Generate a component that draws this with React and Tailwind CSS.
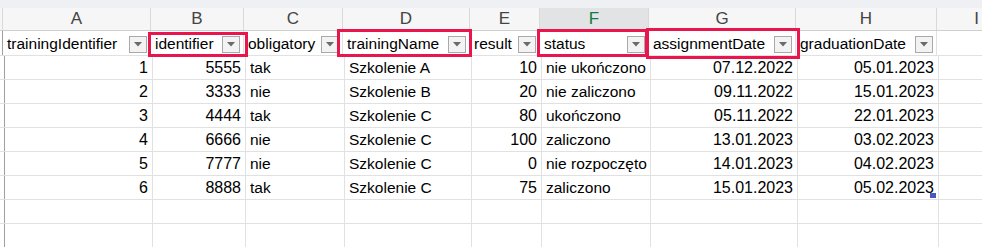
import React from "react";

// column layout: stub + A..I
const columns = [
  { letter: "", width: "w-[3px]" },
  { letter: "A", width: "w-[148px]", head: "trainingIdentifier", align: "right" },
  { letter: "B", width: "w-[93px]", head: "identifier", align: "right" },
  { letter: "C", width: "w-[99px]", head: "obligatory", align: "left" },
  { letter: "D", width: "w-[127px]", head: "trainingName", align: "left" },
  { letter: "E", width: "w-[70px]", head: "result", align: "right" },
  { letter: "F", width: "w-[109px]", head: "status", align: "left", selected: true },
  { letter: "G", width: "w-[147px]", head: "assignmentDate", align: "right" },
  { letter: "H", width: "w-[141px]", head: "graduationDate", align: "right" },
  { letter: "I", width: "w-[80px]" },
];

const rows = [
  ["1", "5555", "tak", "Szkolenie A", "10", "nie ukończono", "07.12.2022", "05.01.2023"],
  ["2", "3333", "nie", "Szkolenie B", "20", "nie zaliczono", "09.11.2022", "15.01.2023"],
  ["3", "4444", "tak", "Szkolenie C", "80", "ukończono", "05.11.2022", "22.01.2023"],
  ["4", "6666", "nie", "Szkolenie C", "100", "zaliczono", "13.01.2023", "03.02.2023"],
  ["5", "7777", "nie", "Szkolenie C", "0", "nie rozpoczęto", "14.01.2023", "04.02.2023"],
  ["6", "8888", "tak", "Szkolenie C", "75", "zaliczono", "15.01.2023", "05.02.2023"],
  [],
  [],
];

// red annotation boxes drawn over the header row
const marks = [
  "left-[148px] top-[32px] w-[100px] h-[25px]",
  "left-[337px] top-[29px] w-[135px] h-[28px]",
  "left-[537px] top-[29px] w-[111px] h-[28px]",
  "left-[646px] top-[28px] w-[154px] h-[31px]",
];

const FilterButton = () => (
  <div className="ml-auto mr-[3px] mb-[2px] self-end w-[18px] h-[17px] shrink-0 border border-[#a9a9a9] bg-[#f3f3f3] flex items-center justify-center">
    <svg width="8" height="5" viewBox="0 0 8 5">
      <polygon points="0,0 8,0 4,4.5" fill="#6a6a6a" />
    </svg>
  </div>
);

export default function App() {
  return (
    <div
      className="relative w-[982px] h-[247px] overflow-hidden bg-white text-black"
      style={{ fontFamily: '"Liberation Sans", Arial, sans-serif' }}
    >
      <div className="h-[8px] bg-[#eef0f3]" />

      {/* column letters */}
      <div className="flex h-[23px] bg-[#f6f6f6] border-b border-[#cfcfcf]">
        {columns.map((c, i) => (
          <div
            key={i}
            className={`${c.width} shrink-0 border-r border-[#d9d9d9] flex items-center justify-center text-[17px] ${
              c.selected ? "bg-[#e2e3e4] text-[#107c41]" : "text-[#444]"
            }`}
          >
            {c.letter}
          </div>
        ))}
      </div>

      {/* header row */}
      <div className="flex h-[25px] border-b border-[#e1e1e1]">
        {columns.map((c, i) => (
          <div
            key={i}
            className={`${c.width} shrink-0 flex items-center text-[15.5px] whitespace-nowrap ${
              i === 0 ? "border-r border-[#9f9f9f]" : "border-r border-[#e1e1e1]"
            }`}
          >
            {c.head && <span className="pl-[4px] pt-[2px]">{c.head}</span>}
            {c.head && <FilterButton />}
          </div>
        ))}
      </div>

      {/* data rows */}
      {rows.map((r, ri) => (
        <div key={ri} className="flex h-[24px] border-b border-[#e1e1e1]">
          {columns.map((c, i) => (
            <div
              key={i}
              className={`${c.width} shrink-0 flex items-center whitespace-nowrap pt-[1px] ${
                i === 0 ? "border-r border-[#9f9f9f]" : "border-r border-[#e1e1e1]"
              } ${c.align === "right" ? "justify-end pr-[4px] text-[16px]" : "pl-[4px] text-[15.5px]"}`}
            >
              {i > 0 && i < 9 ? r[i - 1] : null}
            </div>
          ))}
        </div>
      ))}

      {marks.map((m, i) => (
        <div key={i} className={`absolute ${m} border-[3px] border-[#e9164e]`} />
      ))}

      {/* table resize handle */}
      <div className="absolute left-[930px] top-[193px] w-[6px] h-[5px] bg-[#4858bd]" />
    </div>
  );
}
